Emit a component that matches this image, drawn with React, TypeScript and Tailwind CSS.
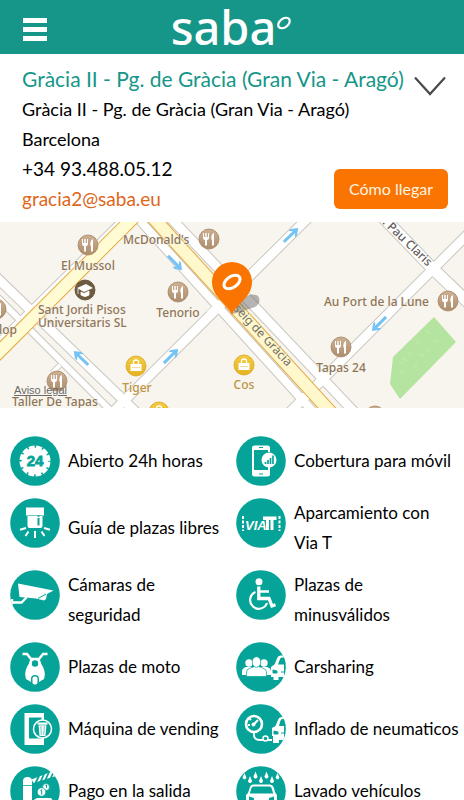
import type { ReactNode } from 'react';

type Point = [number, number];

const BG = '#06a498';

/* ---------- Map ---------- */

function Road({ d, width = 10 }: { d: string; width?: number }) {
  return <path d={d} fill="none" stroke="#c9c6c0" strokeWidth={width + 2} />;
}

function RoadFill({ d, width = 10 }: { d: string; width?: number }) {
  return <path d={d} fill="none" stroke="#ffffff" strokeWidth={width} />;
}

const streets: { d: string; width: number }[] = [
  { d: 'M-10 49 L140 194', width: 9 },
  { d: 'M-4 74 L116 194', width: 6 },
  { d: 'M60 143 L52 151', width: 4 },
  { d: 'M108 195 L314 -10', width: 9 },
  { d: 'M284 196 L476 4', width: 9 },
  { d: 'M376 -12 L432 46 L476 88', width: 11 },
  { d: 'M133 -9 L317 194', width: 8 },
  { d: 'M166 -9 L358 194', width: 9 },
  { d: 'M130 -11 L-10 127', width: 4 },
];

function Restaurant({ at }: { at: Point }) {
  return (
    <g transform={`translate(${at[0]} ${at[1]})`}>
      <circle r="10" fill="url(#brown)" stroke="#a58463" strokeWidth="0.8" />
      <path d="M-6-6v5q0 2 2 2v5.500h2V1q2 0 2-2v-5h-1v4h-1.300v-4h-1.400v4H-5v-4z" fill="#fff" />
      <path d="M5-6q-3 1-2.700 6.500H3v6H5z" fill="#fff" />
    </g>
  );
}

function Shop({ at }: { at: Point }) {
  return (
    <g transform={`translate(${at[0]} ${at[1]})`}>
      <circle r="10" fill="url(#gold)" stroke="#d8a51c" strokeWidth="0.8" />
      <path d="M-5.500-2h11v7h-11z" fill="#fff" />
      <path d="M-2.500-2v-2q0-2 2.500-2t2.500 2v2" fill="none" stroke="#fff" strokeWidth="1.300" />
      <path d="M-3.500 1.500h7" stroke="#e9b92c" strokeDasharray="1 1" />
    </g>
  );
}

function OneWay({ at, angle }: { at: Point; angle: number }) {
  return (
    <path
      transform={`translate(${at[0]} ${at[1]}) rotate(${angle})`}
      d="M-10-1.500H4L1-4.500H4L10 0 4 4.500H1L4 1.500H-10z"
      fill="#74c3f5"
    />
  );
}

function CityMap() {
  return (
    <section aria-label="Mapa" className="relative">
      <svg viewBox="0 0 464 186" className="block w-full bg-[#f8f5ee]">
        <defs>
          <linearGradient id="brown" x1="0" y1="0" x2="0" y2="1">
            <stop offset="0" stopColor="#cdb193" />
            <stop offset="1" stopColor="#ad8d6c" />
          </linearGradient>
          <linearGradient id="gold" x1="0" y1="0" x2="0" y2="1">
            <stop offset="0" stopColor="#f2cc45" />
            <stop offset="1" stopColor="#e6b321" />
          </linearGradient>
        </defs>

        <path d="M434 95L456 120 400 177 390 162 393 135z" fill="#b4e4a0" />
        <path d="M399 140l5 2m3-12l5 3m4-14l4 3m5-14l5 4m4 8l5-2m-20 14l5 2m-22 2l5 3m-8 8l4 4m15-9l-4 4m13-20l3 4" stroke="#c6eab5" />

        {streets.map((s) => (
          <Road key={s.d} {...s} />
        ))}
        {streets.map((s) => (
          <RoadFill key={s.d} {...s} />
        ))}
        <g fill="none">
          <path d="M142-13L-13 142" stroke="#e5a83f" strokeWidth="14" />
          <path d="M142-13L-13 142" stroke="#fffbd2" strokeWidth="12" />
          <path d="M147-11L335 195" stroke="#e5a83f" strokeWidth="14" />
          <path d="M147-11L335 195" stroke="#fff8cc" strokeWidth="12" />
          <path d="M210 93L222 81M298 182L306 174M318 162L326 154" stroke="#fff" strokeWidth="9" />
        </g>

        <OneWay at={[175, 41]} angle={46} />
        <OneWay at={[81, 136]} angle={224} />
        <OneWay at={[171, 134]} angle={-45} />
        <OneWay at={[291, 13]} angle={-44} />
        <OneWay at={[379, 102]} angle={135} />

        <Restaurant at={[88, 23]} />
        <Restaurant at={[209, 17]} />
        <Restaurant at={[178, 70]} />
        <Restaurant at={[-4, 87]} />
        <Restaurant at={[57, 159]} />
        <Restaurant at={[448, 79]} />
        <Restaurant at={[341, 125]} />
        <Restaurant at={[375, 194]} />
        <Shop at={[136, 144]} />
        <Shop at={[244, 143]} />
        <Shop at={[159, 190]} />
        <g transform="translate(85 68)">
          <circle r="10" fill="#6f5b40" stroke="#5c4a32" strokeWidth="0.800" />
          <path d="M-8-2L1-6 8-2-1 2z" fill="#fff" />
          <path d="M-4 2v3q4 3 8 0V1L-1 3.500zM-7-1v5" fill="#fff" stroke="#fff" strokeWidth="0.800" />
        </g>

        <g
          className="font-['Noto_Sans',sans-serif] text-[12px] font-medium"
          fill="#8f7558"
          stroke="#f8f5ee"
          strokeWidth="1"
          paintOrder="stroke"
        >
          <text x="88" y="48" textAnchor="middle">El Mussol</text>
          <text x="123" y="22">McDonald's</text>
          <text x="38" y="92">Sant Jordi Pisos</text>
          <text x="38" y="105">Universitaris SL</text>
          <text x="178" y="95" textAnchor="middle">Tenorio</text>
          <text x="-1" y="112">lop</text>
          <text x="12" y="184">Taller De Tapas</text>
          <text x="324" y="84">Au Port de la Lune</text>
          <text x="341" y="150" textAnchor="middle">Tapas 24</text>
          <g fill="#bb9444">
            <text x="137" y="170" textAnchor="middle">Tiger</text>
            <text x="244" y="167" textAnchor="middle">Cos</text>
          </g>
        </g>
        <g className="font-['Noto_Sans',sans-serif] text-[12px]" fill="#74706b" strokeWidth="1" paintOrder="stroke">
          <text transform="translate(233 87) rotate(47)" stroke="#fff8cc">seig de Gràcia</text>
          <text transform="translate(382 1) rotate(44)" stroke="#fff" fill="#5f5c59" className="font-medium">. Pau Claris</text>
        </g>

        <path d="M232 92L244 76Q250 70 258 74 262 80 255 85L240 90z" fill="#6d6a66" opacity="0.500" />
        <path d="M232 93C229 83 212 76 212 60a20 20 0 0 1 40 0C252 76 235 83 232 93z" fill="#f97400" />
        <ellipse cx="232" cy="60" rx="9" ry="5.500" transform="rotate(-35 232 60)" fill="none" stroke="#fff" strokeWidth="3" />
      </svg>
      <a
        href="#legal"
        className="absolute bottom-2.5 left-3.5 font-['Liberation_Sans',sans-serif] text-[11px] leading-4 text-[#6b6a68] underline"
      >
        Aviso legal
      </a>
    </section>
  );
}

/* ---------- Service icons, drawn on a 50 x 50 disc ---------- */

function Disc({ id, children }: { id: string; children: ReactNode }) {
  return (
    <svg viewBox="0 0 50 50" className="size-[50px] shrink-0 self-start" aria-hidden="true">
      <clipPath id={id}>
        <circle cx="25" cy="25" r="24.800" />
      </clipPath>
      <circle cx="25" cy="25" r="24.800" fill={BG} />
      <g clipPath={`url(#${id})`}>{children}</g>
    </svg>
  );
}

const icons: Record<string, ReactNode> = {
  clock: (
    <>
      <circle cx="25" cy="25" r="15.500" fill="#fff" />
      <circle cx="25" cy="25" r="14.700" fill="none" stroke={BG} strokeWidth="2.800" strokeDasharray="1.600 6.097" strokeDashoffset="0.800" />
      <text x="25" y="30" textAnchor="middle" fill={BG} stroke={BG} strokeWidth="0.800" className="font-['Liberation_Sans',sans-serif] text-[15px] font-bold">24</text>
    </>
  ),
  lamp: (
    <>
      <path d="M16 9.500h18v8h-1.500V28q0 2-2 2h-11q-2 0-2-2V17.500H16z" fill="#fff" />
      <path d="M28.500 20v7.500" stroke={BG} strokeWidth="2" />
      <path d="M28.500 17.300v1.500" stroke={BG} strokeWidth="2" />
      <path d="M17.500 17.500h15" stroke={BG} strokeWidth="0.600" />
      <path d="M16 30l-6 1.700M18.500 33.500l-3 4.500M25 33v7M31.500 33.500l3 4.500M34 30l6 1.700" stroke="#fff" strokeWidth="2" />
    </>
  ),
  camera: (
    <>
      <path d="M8 13.500L43.500 20.500 37 24 36 29 34 30.500 26 28.500 9.500 27z" fill="#fff" />
      <path d="M28 28.500l8-4.500" stroke={BG} strokeWidth="1" />
      <path d="M2 29v5.500M3 32.500h8.500l5-5" fill="none" stroke="#fff" strokeWidth="2.400" />
    </>
  ),
  scooter: (
    <>
      <path d="M12.500 12h4.500l4 5h8l4-5h4.500" fill="none" stroke="#fff" strokeWidth="2.400" />
      <path d="M20 18h10q1 4 3 7 3 6 1 12l-5 3v-3q0-4-4-4t-4 4v3l-5-3q-2-6 1-12 2-3 3-7z" fill="#fff" />
      <circle cx="25" cy="21.500" r="3.800" fill={BG} stroke="#fff" strokeWidth="1.200" />
      <rect x="22.500" y="34.500" width="5" height="8" rx="2" fill="#fff" />
    </>
  ),
  vending: (
    <>
      <path d="M14.500 9H34v7.500h-2.500V13.500H19v21h12.500V32.500H34V41H14.500z" fill="#fff" />
      <circle cx="32.500" cy="25" r="9" fill={BG} stroke="#fff" strokeWidth="1.500" />
      <path d="M27.500 18.500h10v2h-1l-1 11.500h-6l-1-11.500h-1z" fill="#fff" />
      <path d="M28.500 21h8M30.800 22l.500 9M34.300 22l-.500 9" stroke={BG} strokeWidth="0.600" />
    </>
  ),
  barrier: (
    <>
      <path d="M13 40V15q0-4 4.500-4t4.500 4V35l5-3h14l3 4h-7v14H10V38z" fill="#fff" />
      <path d="M13 19.500h9" stroke={BG} strokeWidth="0.800" />
      <path d="M21.500 13.500L42 5.500 46 10 23.500 17z" fill="#fff" />
      <path d="M25 18l4-8M30 17l4-9M35 15l4-9M40 14l4-9" stroke={BG} strokeWidth="1.800" />
      <circle cx="36" cy="21" r="3.500" fill="#fff" stroke={BG} strokeWidth="0.800" />
      <circle cx="31.500" cy="26" r="4.300" fill="#fff" stroke={BG} strokeWidth="0.800" />
      <path d="M30.500 24.500l1.200-.800v5M35.500 19.500l1-.600v3" fill="none" stroke={BG} strokeWidth="1" />
    </>
  ),
  phone: (
    <>
      <path d="M18.500 9.500h13q2.500 0 2.500 2.500V16h-2v-2H18v20h14v-3h2v7q0 2.500-2.500 2.500h-13Q16 40.500 16 38V12q0-2.500 2.500-2.500z" fill="#fff" />
      <path d="M23 11.500h4M23 38h4" stroke={BG} strokeWidth="1.200" />
      <circle cx="33" cy="24" r="7.500" fill="#fff" />
      <path d="M29.500 28v-2M32 28v-4M34.500 28v-6M37 28v-8.500" stroke={BG} strokeWidth="1.700" />
    </>
  ),
  viat: (
    <>
      <path d="M7 18v15M43.500 18v15" stroke="#fff" strokeWidth="2" strokeDasharray="3 1.500" />
      <text x="9" y="32" fill="#fff" className="font-['Liberation_Sans',sans-serif] text-[13px] font-bold italic">VIA</text>
      <path d="M27 18.500h13.500v3.500h-3v10h-3V22h-1.500v10h-3V22h-3z" fill="#fff" />
    </>
  ),
  wheelchair: (
    <g fill="none" stroke="#fff">
      <circle cx="23" cy="11.800" r="3.500" fill="#fff" stroke="none" />
      <path d="M22.800 16.500v12H33l3 7.500 3.500-1.200" strokeWidth="3.300" />
      <path d="M23 21.500h10" strokeWidth="2.500" />
      <path d="M19.500 22a8.700 8.700 0 1 0 11.500 11" strokeWidth="2.200" />
    </g>
  ),
  carsharing: (
    <>
      <g fill="#fff">
        <circle cx="13" cy="21" r="3.700" />
        <circle cx="28" cy="21" r="3.700" />
        <path d="M6 33v-3.500q0-3.500 4-4.500h6v8zM35 33v-3.500q0-3.500-4-4.500h-6v8z" />
      </g>
      <g fill="#fff" stroke={BG} strokeWidth="0.700">
        <path d="M10.500 34.500V30q0-3 4-4l4-1.500h4l4 1.500q4 1 4 4v4.500z" />
        <ellipse cx="20.500" cy="20" rx="4.300" ry="5.300" />
      </g>
      <path d="M48 13.500h-3q-3 0-4 3l-2.500 6-3.500 2.500V35h2.500v3h5v-3H48z" fill="#fff" />
      <path d="M48 15.500h-2q-1.500 0-2.200 2L42 22.500h8V15.500z" fill={BG} />
      <path d="M37 28l4 1v2h-4zM45 30h5" fill={BG} stroke={BG} />
    </>
  ),
  tyre: (
    <>
      <circle cx="18" cy="20" r="8" fill="none" stroke="#fff" strokeWidth="2.600" />
      <path d="M18 20l4-4" stroke="#fff" strokeWidth="2.200" />
      <circle cx="17.500" cy="20.500" r="2" fill="#fff" />
      <path d="M18 28v3q0 5 6 5h12M13 14l2 2M12 21h2" fill="none" stroke="#fff" strokeWidth="1.800" />
      <circle cx="29.500" cy="34.500" r="2.500" fill={BG} stroke="#fff" strokeWidth="1.500" />
      <path d="M48 13h-2q-3 0-4 3l-2.500 6-3.500 2v8h1v7h6v-3h5z" fill="#fff" />
      <path d="M48 15h-1.500q-1.500 0-2.200 2L43 22h7V15z" fill={BG} />
      <path d="M38 27l4 1v2h-4zM45 29h5" fill={BG} stroke={BG} />
    </>
  ),
  wash: (
    <>
      <path
        d="M8.500 7l1.500 3.500a1.800 1.800 0 1 1-3 0zM14 10l1.600 4a1.900 1.900 0 1 1-3.200 0zM19.500 5.500l1.600 4a1.900 1.900 0 1 1-3.200 0zM25 10l1.600 4a1.900 1.900 0 1 1-3.200 0zM30.500 5.500l1.600 4a1.900 1.900 0 1 1-3.200 0zM36 10l1.600 4a1.900 1.900 0 1 1-3.200 0zM41.500 7l1.500 3.500a1.800 1.800 0 1 1-3 0z"
        fill="#fff"
      />
      <path d="M17 18.500h17q2.500 0 3.500 2.500l2 6 1.500 2V46H10V29l2-2 2-6q.800-2.500 3-2.500z" fill="#fff" />
      <path d="M17.500 20.500h16q1.500 0 2 1.500l1.700 5.500H13.800L15.500 22q.600-1.500 2-1.500zM13 30.500l5 1.500v2h-5zM38 30.500l-5 1.500v2h5z" fill={BG} />
    </>
  ),
};

const services: { icon: string; label: string }[] = [
  { icon: 'clock', label: 'Abierto 24h horas' },
  { icon: 'phone', label: 'Cobertura para móvil' },
  { icon: 'lamp', label: 'Guía de plazas libres' },
  { icon: 'viat', label: 'Aparcamiento con Via\u00a0T' },
  { icon: 'camera', label: 'Cámaras de seguridad' },
  { icon: 'wheelchair', label: 'Plazas de minusválidos' },
  { icon: 'scooter', label: 'Plazas de moto' },
  { icon: 'carsharing', label: 'Carsharing' },
  { icon: 'vending', label: 'Máquina de vending' },
  { icon: 'tyre', label: 'Inflado de neumaticos' },
  { icon: 'barrier', label: 'Pago en la salida' },
  { icon: 'wash', label: 'Lavado vehículos' },
];

export default function App() {
  return (
    <div className="h-screen overflow-hidden bg-white font-['Lato',sans-serif] text-black">
      <header className="grid h-[54px] grid-cols-[1fr_auto_1fr] items-center bg-[#159688] pl-[23px] pr-6">
        <button type="button" aria-label="Menú" className="flex w-6 flex-col gap-1 pt-1">
          <span className="h-[5px] w-full bg-white" />
          <span className="h-[5px] w-full bg-white" />
          <span className="h-[5px] w-full bg-white" />
        </button>
        <div className="flex items-start text-white">
          <span className="font-['Noto_Sans',sans-serif] text-[47px] font-medium leading-[52px]">saba</span>
          <svg viewBox="0 0 16 16" className="mt-3.5 size-4" aria-hidden="true">
            <ellipse cx="8" cy="8" rx="6.500" ry="4.300" transform="rotate(-38 8 8)" fill="none" stroke="#fff" strokeWidth="2.200" />
          </svg>
        </div>
      </header>

      <main>
        <section className="flex justify-between pb-2 pl-[22px] pr-4 pt-[10px] text-[18px] leading-[30px]">
          <div className="whitespace-nowrap">
            <h1 className="text-[21px] leading-[30px] text-[#159688]">Gràcia II - Pg. de Gràcia (Gran Via - Aragó)</h1>
            <p>Gràcia II - Pg. de Gràcia (Gran Via - Aragó)</p>
            <p>Barcelona</p>
            <p className="text-[19px] leading-[30px]">+34 93.488.05.12</p>
            <a href="mailto:gracia2@saba.eu" className="block text-[19px] leading-[30px] text-[#e0661a]">gracia2@saba.eu</a>
          </div>
          <div className="-ml-24 flex flex-col items-end justify-between pb-[5px] pt-3">
            <button type="button" aria-label="Mostrar detalles">
              <svg viewBox="0 0 34 22" className="block h-[22px] w-[34px]" aria-hidden="true">
                <path d="M1 1.500L16 18 31 1.500" fill="none" stroke="#4a4a4a" strokeWidth="2.200" />
              </svg>
            </button>
            <button type="button" className="h-10 w-[114px] rounded-md bg-[#f97400] text-[16px] text-[#fff3e0]">
              Cómo llegar
            </button>
          </div>
        </section>

        <CityMap />

        <ul className="grid grid-cols-[226fr_228fr] gap-y-3 pl-[10px] pt-7">
          {services.map(({ icon, label }) => (
            <li key={icon} className="flex items-center gap-2 odd:pr-2 even:pr-1">
              <Disc id={icon}>{icons[icon]}</Disc>
              <span className="text-[17px] leading-[30px]">{label}</span>
            </li>
          ))}
        </ul>
      </main>
    </div>
  );
}
